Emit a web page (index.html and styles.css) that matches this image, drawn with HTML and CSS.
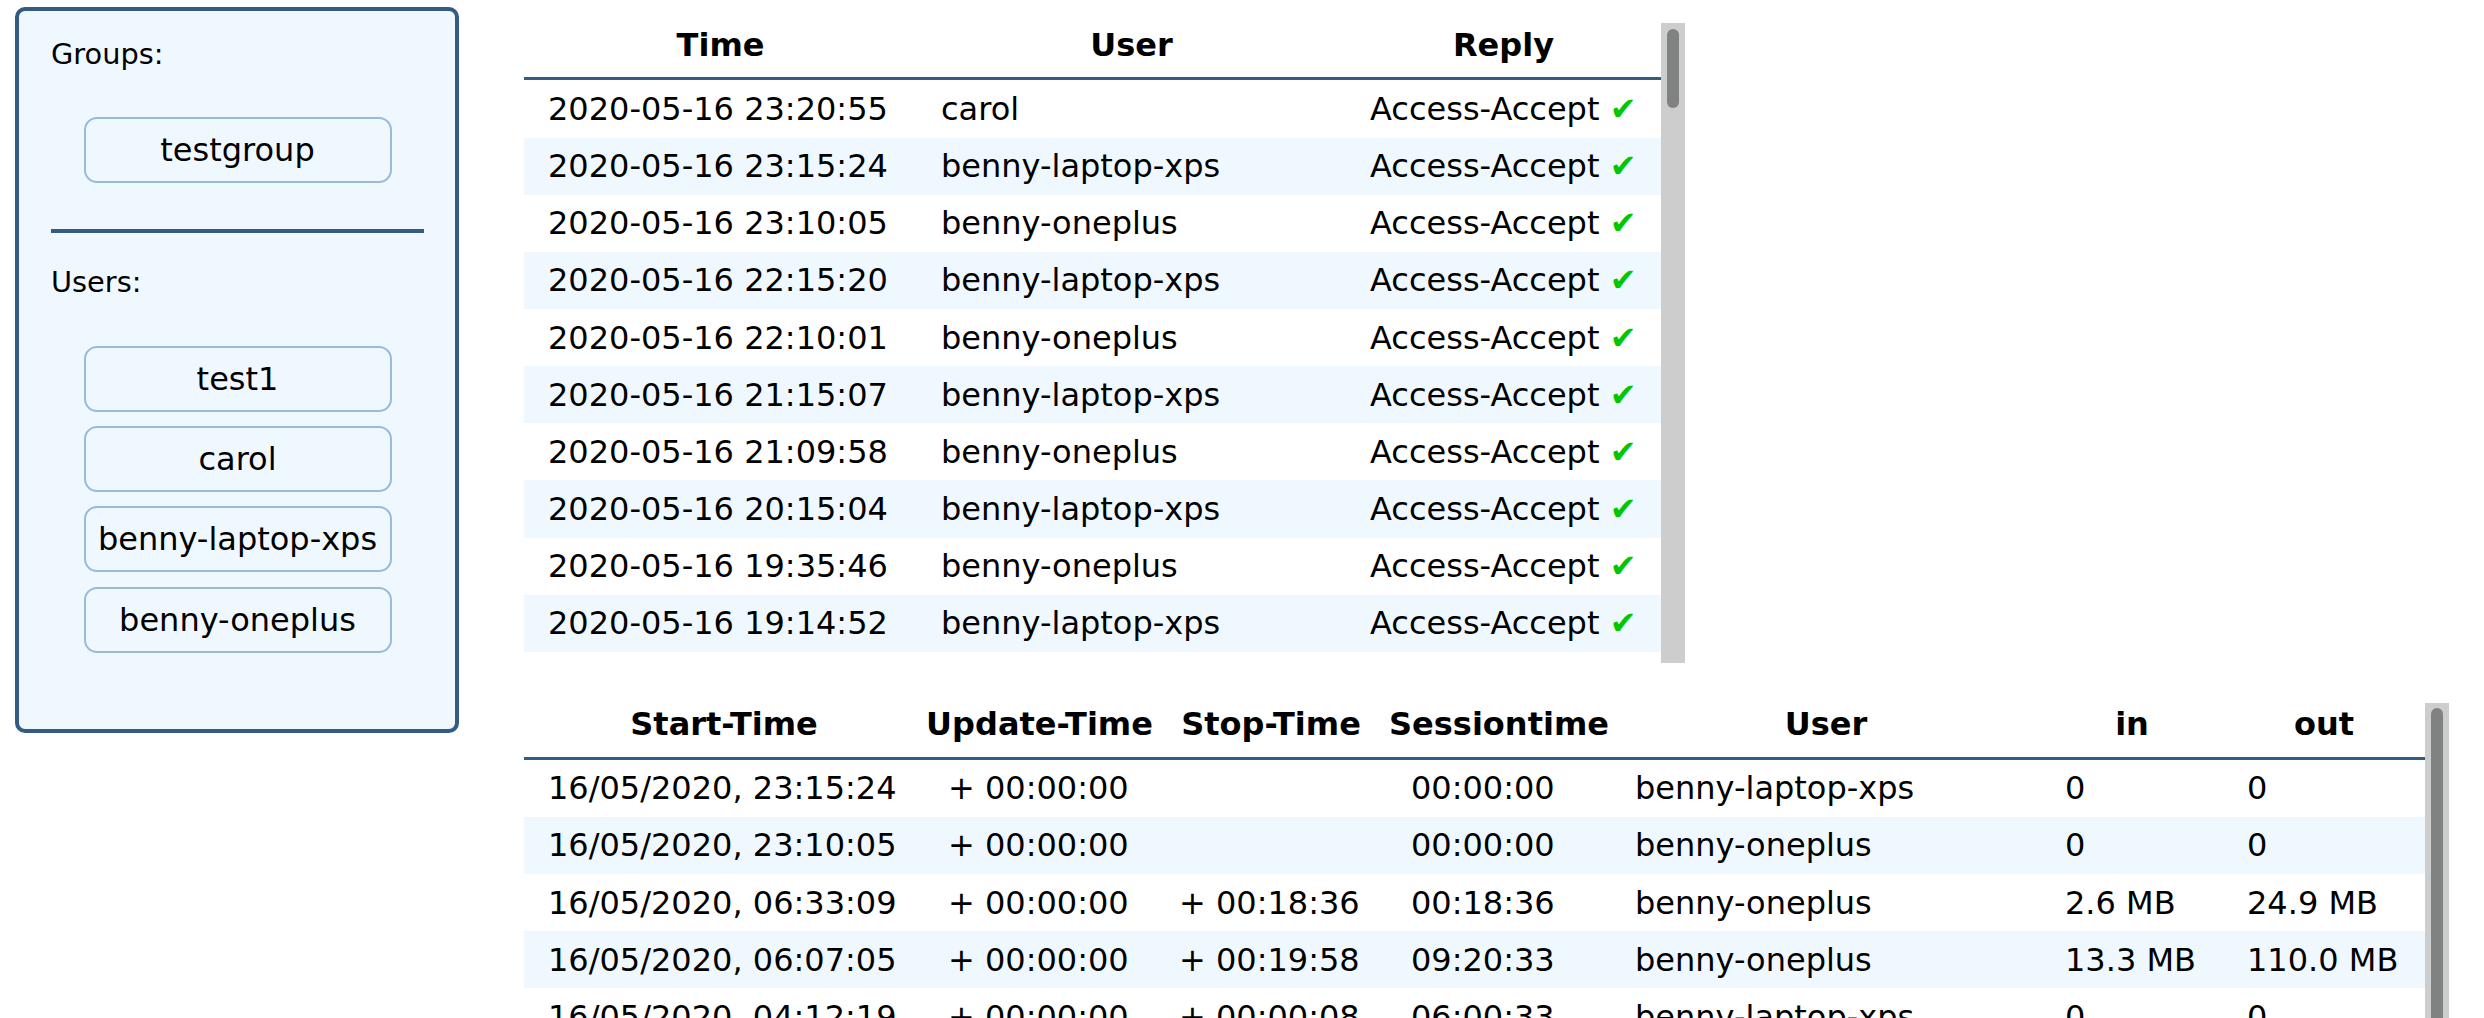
FILE: index.html
```html
<!DOCTYPE html>
<html lang="en">
<head>
<meta charset="utf-8">
<title>RADIUS overview</title>
<link rel="stylesheet" href="styles.css">
</head>
<body>
<div class="page">
  <aside class="panel">
    <div class="label">Groups:</div>
    <div class="chips chips-groups">
      <div class="chip">testgroup</div>
    </div>
    <div class="divider"></div>
    <div class="label label-users">Users:</div>
    <div class="chips chips-users">
      <div class="chip">test1</div>
      <div class="chip">carol</div>
      <div class="chip">benny-laptop-xps</div>
      <div class="chip">benny-oneplus</div>
    </div>
  </aside>

  <main class="main">
    <section class="scroller scroller-auth">
      <div class="viewport">
        <table class="grid grid-auth">
          <colgroup><col class="c-time"><col class="c-user"><col class="c-reply"></colgroup>
          <thead><tr><th>Time</th><th>User</th><th>Reply</th></tr></thead>
          <tbody>
            <tr><td>2020-05-16 23:20:55</td><td>carol</td><td>Access-Accept <span class="ok">✔</span></td></tr>
            <tr><td>2020-05-16 23:15:24</td><td>benny-laptop-xps</td><td>Access-Accept <span class="ok">✔</span></td></tr>
            <tr><td>2020-05-16 23:10:05</td><td>benny-oneplus</td><td>Access-Accept <span class="ok">✔</span></td></tr>
            <tr><td>2020-05-16 22:15:20</td><td>benny-laptop-xps</td><td>Access-Accept <span class="ok">✔</span></td></tr>
            <tr><td>2020-05-16 22:10:01</td><td>benny-oneplus</td><td>Access-Accept <span class="ok">✔</span></td></tr>
            <tr><td>2020-05-16 21:15:07</td><td>benny-laptop-xps</td><td>Access-Accept <span class="ok">✔</span></td></tr>
            <tr><td>2020-05-16 21:09:58</td><td>benny-oneplus</td><td>Access-Accept <span class="ok">✔</span></td></tr>
            <tr><td>2020-05-16 20:15:04</td><td>benny-laptop-xps</td><td>Access-Accept <span class="ok">✔</span></td></tr>
            <tr><td>2020-05-16 19:35:46</td><td>benny-oneplus</td><td>Access-Accept <span class="ok">✔</span></td></tr>
            <tr><td>2020-05-16 19:14:52</td><td>benny-laptop-xps</td><td>Access-Accept <span class="ok">✔</span></td></tr>
          </tbody>
        </table>
      </div>
      <div class="track"><div class="thumb thumb-auth"></div></div>
    </section>

    <section class="scroller scroller-acct">
      <div class="viewport">
        <table class="grid grid-acct">
          <colgroup>
            <col class="c-start"><col class="c-update"><col class="c-stop"><col class="c-session">
            <col class="c-auser"><col class="c-in"><col class="c-out">
          </colgroup>
          <thead><tr><th>Start-Time</th><th>Update-Time</th><th>Stop-Time</th><th>Sessiontime</th><th>User</th><th>in</th><th>out</th></tr></thead>
          <tbody>
            <tr><td>16/05/2020, 23:15:24</td><td>+ 00:00:00</td><td></td><td>00:00:00</td><td>benny-laptop-xps</td><td>0</td><td>0</td></tr>
            <tr><td>16/05/2020, 23:10:05</td><td>+ 00:00:00</td><td></td><td>00:00:00</td><td>benny-oneplus</td><td>0</td><td>0</td></tr>
            <tr><td>16/05/2020, 06:33:09</td><td>+ 00:00:00</td><td>+ 00:18:36</td><td>00:18:36</td><td>benny-oneplus</td><td>2.6 MB</td><td>24.9 MB</td></tr>
            <tr><td>16/05/2020, 06:07:05</td><td>+ 00:00:00</td><td>+ 00:19:58</td><td>09:20:33</td><td>benny-oneplus</td><td>13.3 MB</td><td>110.0 MB</td></tr>
            <tr><td>16/05/2020, 04:12:19</td><td>+ 00:00:00</td><td>+ 00:00:08</td><td>06:00:33</td><td>benny-laptop-xps</td><td>0</td><td>0</td></tr>
          </tbody>
        </table>
      </div>
      <div class="track"><div class="thumb thumb-acct"></div></div>
    </section>
  </main>
</div>
</body>
</html>
```

FILE: styles.css
```css
html, body {
  margin: 0;
  padding: 0;
  overflow: hidden;
  background: #ffffff;
}

body {
  font-family: "DejaVu Sans", "Noto Sans", sans-serif;
  color: #000000;
}

.page {
  display: flex;
  align-items: flex-start;
}

/* ---------- left panel ---------- */
.panel {
  box-sizing: border-box;
  width: 444px;
  height: 726px;
  margin: 7px 0 0 15px;
  padding: 27.3px 31px 0 32px;
  border: 4px solid #345b80;
  border-radius: 10px;
  background: #f0f8ff;
  display: flex;
  flex-direction: column;
  flex-shrink: 0;
}

.label {
  font-size: 28.8px;
  line-height: 33.5px;
}

.label-users {
  margin-top: 32.9px;
}

.chips {
  display: flex;
  flex-direction: column;
  align-items: center;
  gap: 14.3px;
}

.chips-groups {
  margin-top: 45px;
}

.chips-users {
  margin-top: 46.6px;
}

.chip {
  box-sizing: border-box;
  width: 308px;
  height: 66px;
  border: 2px solid #99badb;
  border-radius: 13px;
  display: flex;
  align-items: center;
  justify-content: center;
  font-size: 32px;
  white-space: nowrap;
}

.divider {
  height: 4px;
  margin-top: 45.9px;
  background: #345b80;
}

/* ---------- right side ---------- */
.main {
  margin-left: 65px;
  padding-top: 23.3px;
  display: flex;
  flex-direction: column;
  gap: 40px;
}

.scroller {
  display: flex;
  height: 639.4px;
}

.viewport {
  overflow: hidden;
  height: 100%;
}

.track {
  box-sizing: border-box;
  width: 24px;
  height: 100%;
  padding: 5.7px 6px;
  background: #cdcdcd;
  flex-shrink: 0;
}

.thumb {
  width: 12px;
  border-radius: 6px;
  background: #808181;
}

.thumb-auth {
  height: 79.3px;
}

.thumb-acct {
  height: 420px;
}

/* ---------- tables ---------- */
.grid {
  border-collapse: separate;
  border-spacing: 0;
  table-layout: fixed;
  font-size: 32px;
}

.grid tr {
  height: 57.15px;
}

.grid th {
  box-sizing: border-box;
  padding: 2.6px 0 0;
  font-weight: bold;
  text-align: center;
  vertical-align: top;
  white-space: nowrap;
  border-bottom: 3.2px solid #345b80;
  background: #ffffff;
}

.grid td {
  padding: 9.5px 0 0 24px;
  text-align: left;
  vertical-align: top;
  white-space: nowrap;
}

.grid tbody tr:nth-child(even) td {
  background: #f0f8ff;
}

.ok {
  color: #00c800;
}

.grid-auth {
  width: 1137px;
}

.c-time { width: 393px; }
.c-user { width: 429px; }
.c-reply { width: 315px; }

.grid-acct {
  width: 1901px;
}

.c-start { width: 400px; }
.c-update { width: 231px; }
.c-stop { width: 232px; }
.c-session { width: 224px; }
.c-auser { width: 430px; }
.c-in { width: 182px; }
.c-out { width: 202px; }
```
